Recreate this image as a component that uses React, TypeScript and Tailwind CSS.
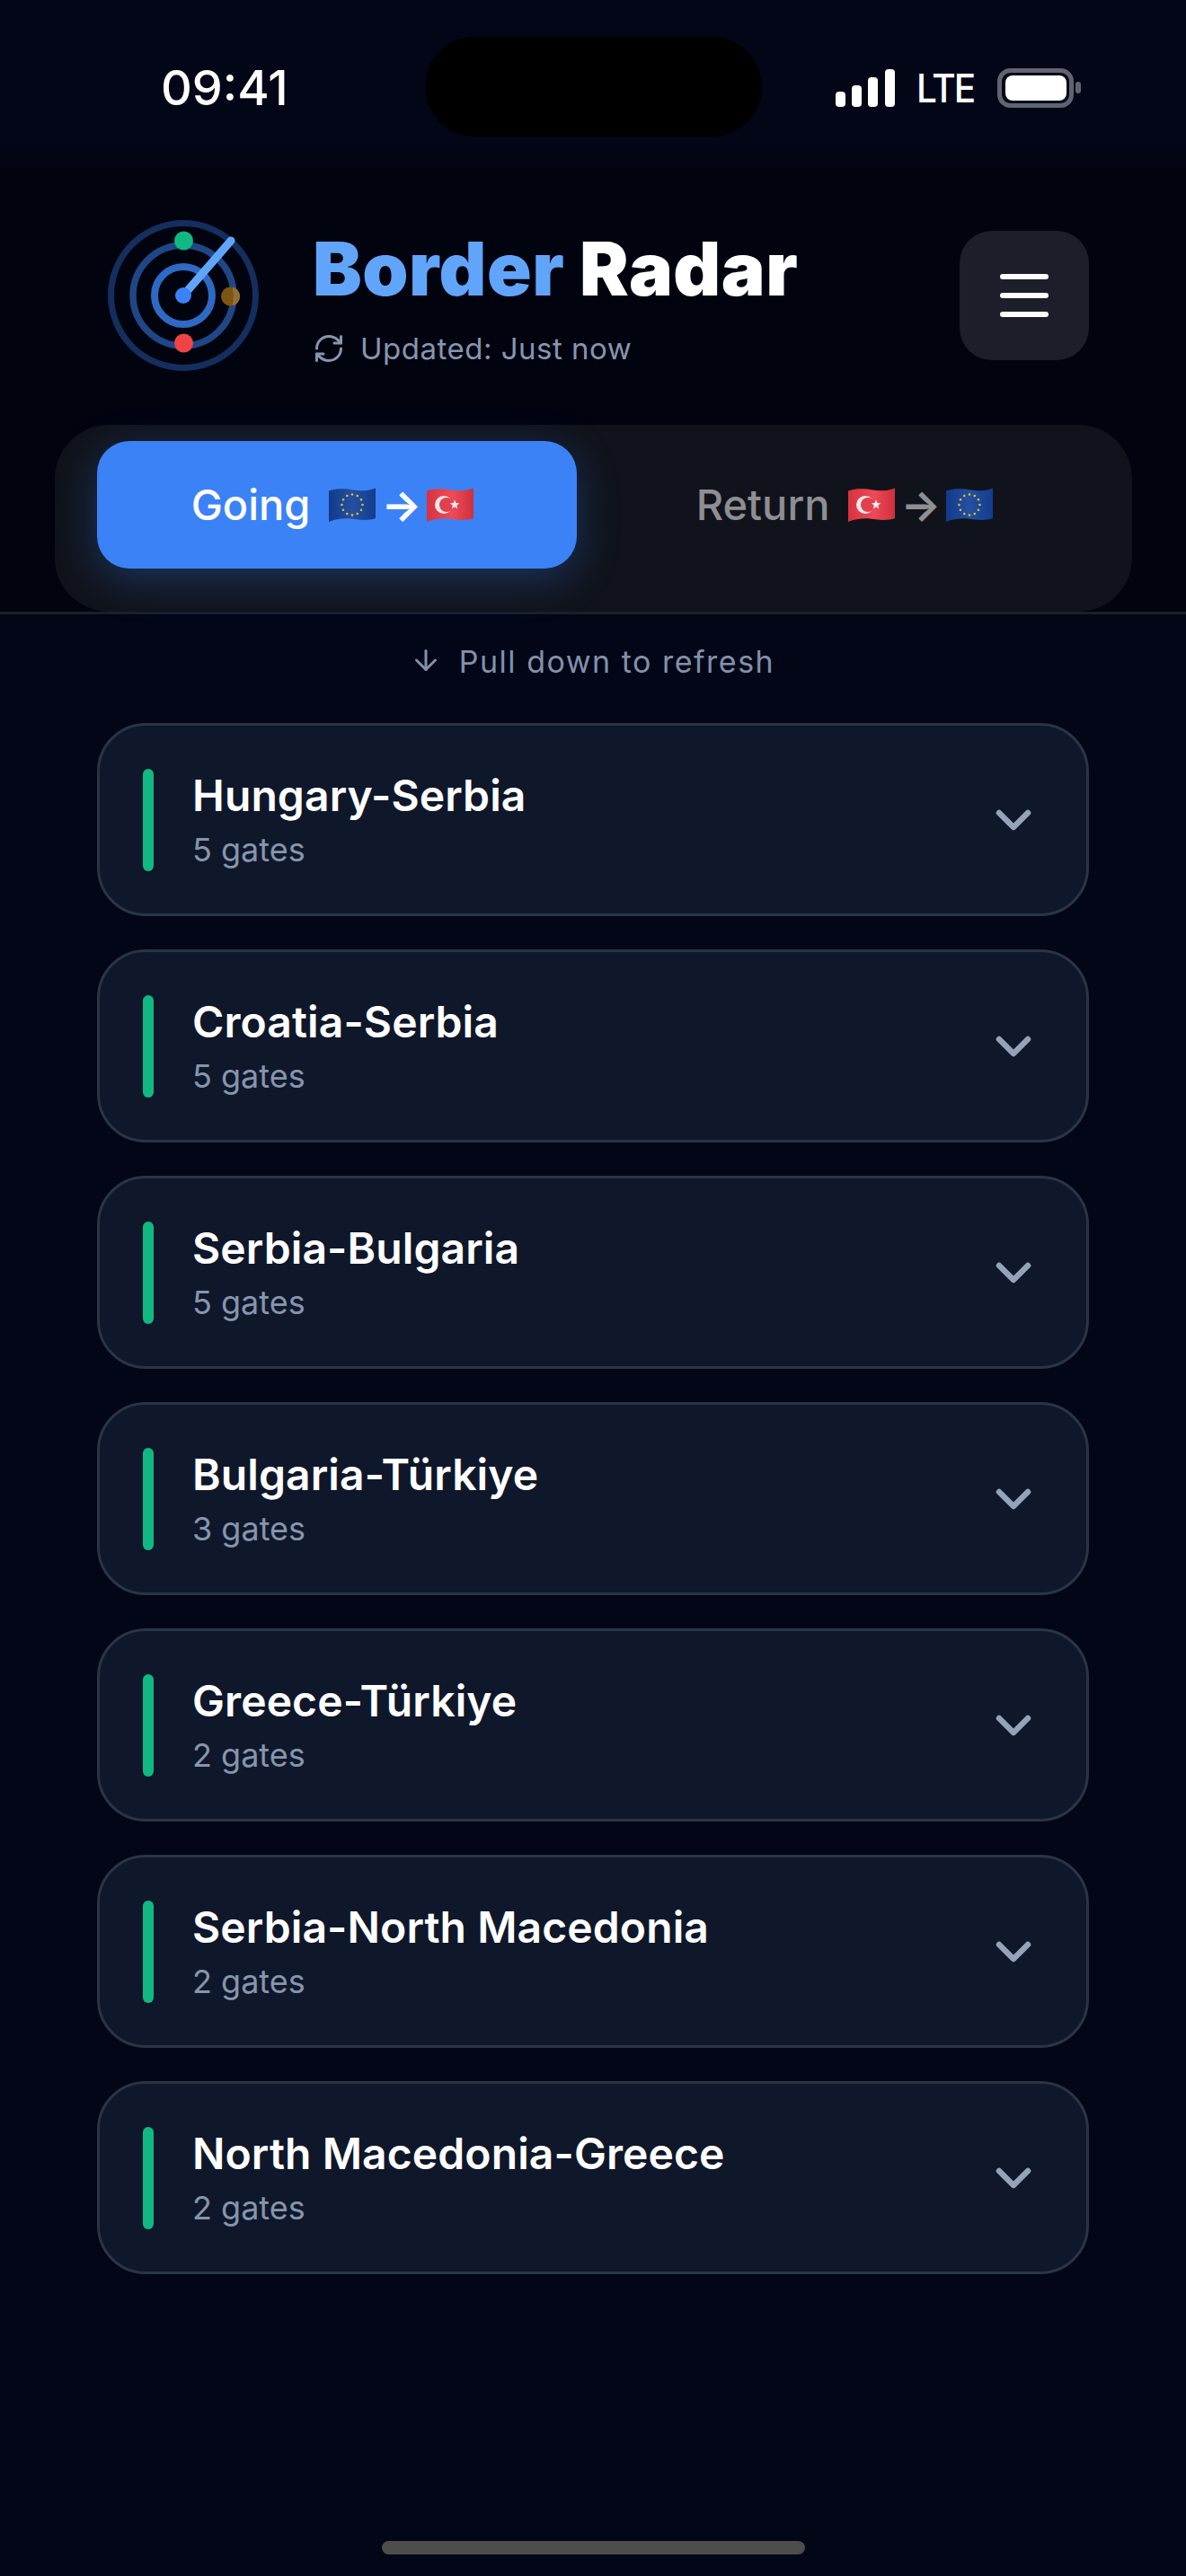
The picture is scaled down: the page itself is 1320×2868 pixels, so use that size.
import React from "react";
import { ArrowDown, RefreshCw } from "lucide-react";

const routes = [
  ["Hungary-Serbia", "5 gates"],
  ["Croatia-Serbia", "5 gates"],
  ["Serbia-Bulgaria", "5 gates"],
  ["Bulgaria-Türkiye", "3 gates"],
  ["Greece-Türkiye", "2 gates"],
  ["Serbia-North Macedonia", "2 gates"],
  ["North Macedonia-Greece", "2 gates"],
];

const WAVE = "M0 3.5C9 0.5 19 1 27 2.5S44 3.5 52 0.5V34C44 36.8 35 36 26 34.8S8 34.8 0 38Z";

function EuFlag({ id }: { id: string }) {
  const stars = Array.from({ length: 12 }, (_, i) => {
    const a = (i * Math.PI) / 6;
    return [26 + 11.5 * Math.sin(a), 19 - 11.5 * Math.cos(a)];
  });
  return (
    <svg width="52" height="38" viewBox="0 0 52 38" className="shrink-0" aria-label="EU flag">
      <defs>
        <linearGradient id={id} x1="0" x2="1" y1="0" y2="0">
          <stop offset="0" stopColor="#123a8a" />
          <stop offset="0.5" stopColor="#24509f" />
          <stop offset="1" stopColor="#133c8e" />
        </linearGradient>
      </defs>
      <path d={WAVE} fill={`url(#${id})`} />
      {stars.map(([x, y], i) => (
        <circle key={i} cx={x} cy={y} r="1.3" fill="#e3b93f" />
      ))}
    </svg>
  );
}

function TrFlag({ id }: { id: string }) {
  return (
    <svg width="52" height="38" viewBox="0 0 52 38" className="shrink-0" aria-label="Turkish flag">
      <defs>
        <linearGradient id={id} x1="0" x2="1" y1="0" y2="0">
          <stop offset="0" stopColor="#d8323f" />
          <stop offset="0.55" stopColor="#ee4a58" />
          <stop offset="1" stopColor="#cf2f3c" />
        </linearGradient>
      </defs>
      <path d={WAVE} fill={`url(#${id})`} />
      <circle cx="19" cy="19" r="10" fill="#f6e8ea" />
      <circle cx="22" cy="19" r="8" fill="#e2404d" />
      <path d="M31 13.5l1.5 3.6 3.8.2-3 2.4 1 3.7-3.3-2.1-3.2 2.1 1-3.7-3-2.4 3.8-.2z" fill="#f8eef0" />
    </svg>
  );
}

function Radar() {
  return (
    <svg width="192" height="192" viewBox="0 0 192 192" className="shrink-0" aria-label="Border Radar logo">
      <circle cx="96" cy="96" r="80.5" fill="none" stroke="#142e5e" strokeWidth="7" />
      <circle cx="96" cy="96" r="56" fill="none" stroke="#1f4786" strokeWidth="7.5" />
      <circle cx="96" cy="96" r="32" fill="none" stroke="#2e69c4" strokeWidth="8" />
      <line x1="96" y1="96" x2="149" y2="35" stroke="#60a5fa" strokeWidth="9" strokeLinecap="round" />
      <circle cx="96" cy="96" r="9" fill="#3b82f6" />
      <circle cx="96.5" cy="35" r="10.5" fill="#10b981" />
      <circle cx="148.5" cy="97" r="10.5" fill="#7d5410" />
      <path d="M151 86.8A10.5 10.5 0 0 1 151 107.2A60 60 0 0 0 151 86.8Z" fill="#8f7136" />
      <circle cx="96.5" cy="149" r="10.5" fill="#ef4444" />
    </svg>
  );
}

function StatusIcons() {
  return (
    <div className="flex items-center">
      <svg width="66" height="42" viewBox="0 0 66 42" className="shrink-0" aria-hidden="true">
        <rect x="0" y="25" width="11" height="17" rx="4" fill="#fff" />
        <rect x="18" y="18" width="11" height="24" rx="4" fill="#fff" />
        <rect x="36" y="9" width="11" height="33" rx="4" fill="#fff" />
        <rect x="55" y="0" width="11" height="42" rx="4" fill="#fff" />
      </svg>
      <span className="ml-[24px] w-[65px] origin-left text-[44px] leading-none font-medium tracking-[-2px] text-white [transform:scaleX(0.92)]">LTE</span>
      <svg width="94" height="44" viewBox="0 0 94 44" className="ml-[25px] shrink-0" aria-hidden="true">
        <rect x="2.5" y="2.5" width="80" height="39" rx="12" fill="none" stroke="#5f6470" strokeWidth="5" />
        <rect x="9" y="8" width="68" height="28" rx="8" fill="#fff" />
        <rect x="87" y="15" width="6" height="13" rx="3" fill="#5f6470" />
      </svg>
    </div>
  );
}

function Card({ name, gates }: { name: string; gates: string }) {
  return (
    <div className="flex h-[215px] items-center rounded-[54px] border-[3px] border-[#2a3445] bg-[#0f172a] pl-[48px] pr-[45px]">
      <div className="h-[114px] w-[12px] shrink-0 rounded-full bg-[#10b981]" />
      <div className="ml-[43px] min-w-0 flex-1">
        <div className="text-[48px] leading-[58px] font-semibold tracking-[0.1px] text-white">{name}</div>
        <div className="mt-[9px] text-[36px] leading-[44px] text-[#8695ad]">{gates}</div>
      </div>
      <svg width="72" height="72" viewBox="0 0 72 72" className="shrink-0" aria-hidden="true">
        <path d="M20 28L36 44L52 28" fill="none" stroke="#94a3b8" strokeWidth="6.5" strokeLinecap="round" strokeLinejoin="round" />
      </svg>
    </div>
  );
}

export default function App() {
  return (
    <div className="relative flex h-[2868px] w-[1320px] flex-col overflow-hidden bg-[#020617] [font-family:Inter,sans-serif]">
      <div className="flex h-[195px] shrink-0 items-center justify-between bg-gradient-to-b from-[#020617] from-80% to-[#01030f] pl-[179px] pr-[116px]">
        <span className="text-[54px] leading-none font-medium text-white">09:41</span>
        <StatusIcons />
      </div>
      <div className="absolute left-[473px] top-[41px] h-[111px] w-[375px] rounded-[56px] bg-black" />

      <header className="shrink-0 border-b-[3px] border-[#1b1f2a] bg-[#01030f]">
        <div className="flex items-center justify-between px-[108px] pt-[38px]">
          <div className="flex items-center gap-[48px]">
            <Radar />
            <div className="pt-[6px]">
              <h1 className="text-[82px] leading-[88px] font-black tracking-[0.5px] text-white">
                <span className="text-[#60a5fa]">Border</span> Radar
              </h1>
              <div className="mt-[23px] flex items-center text-[33px] leading-[42px] tracking-[0.5px] text-[#8796ae]">
                <RefreshCw size={36} strokeWidth={2} className="shrink-0" />
                <span className="ml-[17px]">Updated: Just now</span>
              </div>
            </div>
          </div>
          <button className="flex h-[144px] w-[144px] flex-col items-center justify-center gap-[15px] rounded-[36px] bg-[#1c1f2a]">
            <span className="h-[6px] w-[54px] rounded-full bg-white" />
            <span className="h-[6px] w-[54px] rounded-full bg-white" />
            <span className="h-[6px] w-[54px] rounded-full bg-white" />
          </button>
        </div>
        <div className="ml-[61px] mr-[60px] mt-[48px] flex h-[208px] rounded-[60px] bg-[#10131b] pl-[47px] pr-[49px] pt-[18px]">
          <div className="flex h-[142px] w-[534px] shrink-0 items-center justify-center rounded-[36px] bg-[#3b82f6] pr-[10px] text-[47px] font-medium text-white shadow-[0_12px_48px_rgba(59,130,246,0.3)]">
            <span>Going</span>
            <span className="ml-[21px]"><EuFlag id="eu-a" /></span>
            <span className="mx-[6px] font-bold">→</span>
            <TrFlag id="tr-a" />
          </div>
          <div className="ml-[27px] flex h-[142px] flex-1 items-center justify-center text-[47px] font-medium text-[#8e8e93]">
            <span>Return</span>
            <span className="ml-[21px]"><TrFlag id="tr-b" /></span>
            <span className="mx-[6px] font-bold">→</span>
            <EuFlag id="eu-b" />
          </div>
        </div>
      </header>

      <div className="flex h-[121px] shrink-0 items-start justify-center pr-[2px] pt-[33px] text-[34px] leading-[40px] tracking-[1.5px] text-[#8291aa]">
        <ArrowDown size={36} strokeWidth={2} className="shrink-0" />
        <span className="ml-[19px]">Pull down to refresh</span>
      </div>

      <div className="flex flex-col gap-[37px] px-[108px]">
        {routes.map(([n, g]) => (
          <Card key={n} name={n} gates={g} />
        ))}
      </div>

      <div className="absolute bottom-[24px] left-[425px] h-[15px] w-[471px] rounded-full bg-[#4d4d4d]" />
    </div>
  );
}
